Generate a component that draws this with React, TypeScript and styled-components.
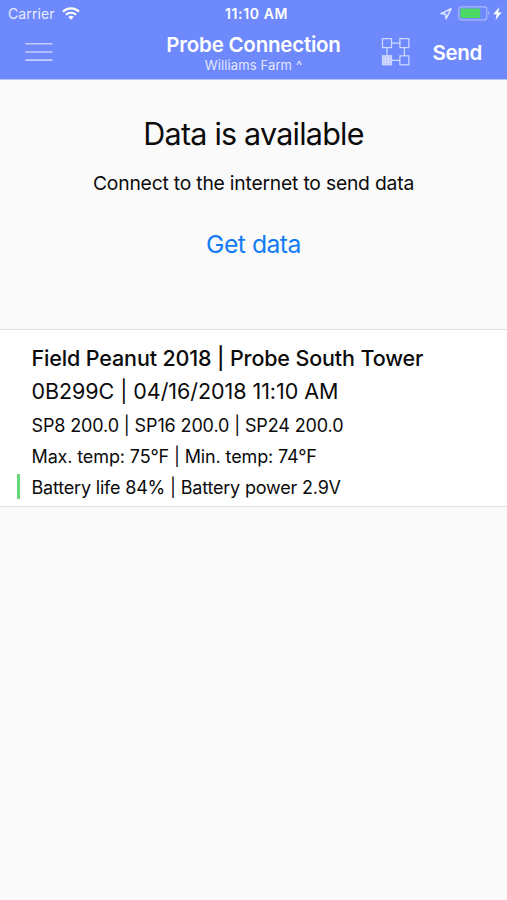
import React from "react";
import styled, { createGlobalStyle } from "styled-components";

const GlobalStyle = createGlobalStyle`
  * { box-sizing: border-box; }
  body {
    margin: 0;
    background: #fafafa;
    color: #0b0b0c;
    font-family: Inter, "Liberation Sans", sans-serif;
    -webkit-font-smoothing: antialiased;
  }
`;

const Screen = styled.div`
  width: 507px;
  height: 900px;
  display: flex;
  flex-direction: column;
  background: #fafafa;
  overflow: hidden;
`;

const Header = styled.header`
  height: 80px;
  background: #6e89fc;
  border-bottom: 1px solid #b9c4f6;
  color: #fff;
`;

const StatusBar = styled.div`
  height: 27px;
  display: grid;
  grid-template-columns: 1fr auto 1fr;
  align-items: center;
  padding: 0 5px 0 8px;
`;

const Carrier = styled.div`
  display: flex;
  align-items: center;
  gap: 7px;
  color: #e9edff;
`;

const Clock = styled.time`
  padding-left: 3px;
`;

const StatusIcons = styled.div`
  display: flex;
  align-items: center;
  justify-content: flex-end;
`;

const NavBar = styled.nav`
  height: 52px;
  display: grid;
  grid-template-columns: 1fr auto 1fr;
  align-items: start;
  padding: 0 25px 0 25px;
`;

const IconButton = styled.button<{ $top: number }>`
  display: flex;
  padding: 0;
  margin-top: ${(p) => p.$top}px;
  border: 0;
  background: none;
  color: inherit;
`;

const TitleBlock = styled.div`
  display: flex;
  flex-direction: column;
  align-items: center;
  padding-top: 6px;
`;

const Actions = styled.div`
  display: flex;
  justify-content: flex-end;
  gap: 22px;
`;

interface LabelProps {
  $size: number;
  $line: number;
  $weight?: number;
  $spacing?: number;
  $color?: string;
  $top?: number;
}

const Label = styled.span<LabelProps>`
  display: block;
  white-space: nowrap;
  font-size: ${(p) => p.$size}px;
  line-height: ${(p) => p.$line}px;
  font-weight: ${(p) => p.$weight ?? 400};
  letter-spacing: ${(p) => p.$spacing ?? 0}px;
  color: ${(p) => p.$color ?? "inherit"};
  margin-top: ${(p) => p.$top ?? 0}px;
`;

const Notice = styled.section`
  height: 249px;
  display: flex;
  flex-direction: column;
  align-items: center;
  padding-top: 34px;
`;

const Record = styled.article`
  height: 178px;
  padding: 12px 16px 0 16px;
  background: #fff;
  border-top: 1px solid #e2e2e3;
  border-bottom: 1px solid #e2e2e3;
`;

const RecordRow = styled.div<{ $height: number }>`
  height: ${(p) => p.$height}px;
  display: flex;
  align-items: center;
`;

const Marker = styled.span<{ $active?: boolean }>`
  width: 3px;
  height: 25px;
  margin: -2px 12px 0 0.5px;
  flex: none;
  background: ${(p) => (p.$active ? "#69d67b" : "transparent")};
`;

const WifiIcon = () => (
  <svg width="18" height="13" viewBox="0 0 18 13" fill="none" stroke="#fff" strokeWidth="2.2">
    <path d="M1 4.6a11.6 11.6 0 0 1 16 0" />
    <path d="M3.9 7.8a7.4 7.4 0 0 1 10.2 0" />
    <path d="M9 12.8 6.3 10a3.9 3.9 0 0 1 5.4 0Z" fill="#fff" stroke="none" />
  </svg>
);

const LocationIcon = styled(({ className }: { className?: string }) => (
  <svg className={className} width="12" height="12" viewBox="0 0 12 12" fill="none" stroke="#dde4ff" strokeWidth="1.5" strokeLinejoin="round">
    <path d="M11 .8 1 5.6l4.6.7.4 4.5Z" />
  </svg>
))`
  margin-right: 6px;
`;

const BatteryIcon = styled(({ className }: { className?: string }) => (
  <svg className={className} width="33" height="15" viewBox="0 0 33 15">
    <rect x=".7" y=".8" width="28.1" height="13" rx="2.6" fill="none" stroke="#aab8fd" strokeWidth="1.2" />
    <rect x="2.4" y="2.6" width="19.8" height="9.4" rx="0.8" fill="#4cd964" />
    <path d="M30 5q2.2 2.3 0 4.7Z" fill="#aab8fd" />
  </svg>
))`
  margin-right: 2px;
`;

const BoltIcon = () => (
  <svg width="9" height="13" viewBox="0 0 9 13">
    <path d="M6.3 0 .4 7.3h3.3L2.5 13 8.6 5.4H5.2Z" fill="#fff" />
  </svg>
);

const MenuIcon = () => (
  <svg width="28" height="20" viewBox="0 0 28 20" stroke="#c3cefe" strokeWidth="1.6">
    <path d="M.3 1.8h27.2M.3 10h27.2M.3 18.1h27.2" />
  </svg>
);

const NetworkIcon = () => (
  <svg width="29" height="29" viewBox="0 0 29 29" fill="none" stroke="#d0d9fe" strokeWidth="1.2">
    <rect x="1.5" y="1.6" width="9" height="9" />
    <rect x="18.9" y="1.6" width="9" height="9" />
    <rect x="1.5" y="18.8" width="9" height="9" fill="#bac6fd" />
    <rect x="18.9" y="18.8" width="9" height="9" />
    <path d="M10.5 6.1h8.4M10.5 23.3h8.4M6 10.6v8.2M23.4 10.6v8.2" />
    <path d="M2 21.8h8M2 24.8h8M4.5 19.3v8M7.5 19.3v8" strokeWidth=".7" stroke="#dfe5ff" />
  </svg>
);

interface RecordLine {
  text: string;
  height: number;
  size: number;
  weight?: number;
  spacing: number;
  active?: boolean;
}

const recordLines: RecordLine[] = [
  { text: "Field Peanut 2018 | Probe South Tower", height: 31, size: 21.5, weight: 500, spacing: -0.14 },
  { text: "0B299C | 04/16/2018 11:10 AM", height: 35, size: 21.5, spacing: -0.06 },
  { text: "SP8 200.0 | SP16 200.0 | SP24 200.0", height: 35, size: 18, spacing: -0.13 },
  { text: "Max. temp: 75°F | Min. temp: 74°F", height: 28, size: 18, spacing: -0.13 },
  { text: "Battery life 84% | Battery power 2.9V", height: 33, size: 18, spacing: -0.19, active: true },
];

export default function App() {
  return (
    <Screen>
      <GlobalStyle />
      <Header>
        <StatusBar>
          <Carrier>
            <Label $size={14} $line={18} $spacing={0.1}>Carrier</Label>
            <WifiIcon />
          </Carrier>
          <Clock>
            <Label $size={14} $line={18} $weight={600} $spacing={0.6}>11:10 AM</Label>
          </Clock>
          <StatusIcons>
            <LocationIcon />
            <BatteryIcon />
            <BoltIcon />
          </StatusIcons>
        </StatusBar>
        <NavBar>
          <IconButton $top={15} aria-label="Menu"><MenuIcon /></IconButton>
          <TitleBlock>
            <Label $size={20.5} $line={24} $weight={600} $spacing={-0.22}>Probe Connection</Label>
            <Label $size={13} $line={16} $spacing={0.12} $color="#e3e8ff">Williams Farm ^</Label>
          </TitleBlock>
          <Actions>
            <IconButton $top={10} aria-label="Network"><NetworkIcon /></IconButton>
            <Label $size={20.5} $line={26} $weight={600} $spacing={-0.3} $top={13}>Send</Label>
          </Actions>
        </NavBar>
      </Header>
      <Notice>
        <Label $size={30.5} $line={40} $spacing={-0.78}>Data is available</Label>
        <Label $size={19.3} $line={26} $top={16} $spacing={-0.2}>Connect to the internet to send data</Label>
        <Label $size={24.7} $line={32} $top={32} $spacing={-0.5} $color="#127cf5">Get data</Label>
      </Notice>
      <Record>
        {recordLines.map((line) => (
          <RecordRow key={line.text} $height={line.height}>
            <Marker $active={line.active} />
            <Label $size={line.size} $line={24} $weight={line.weight} $spacing={line.spacing}>
              {line.text}
            </Label>
          </RecordRow>
        ))}
      </Record>
    </Screen>
  );
}
